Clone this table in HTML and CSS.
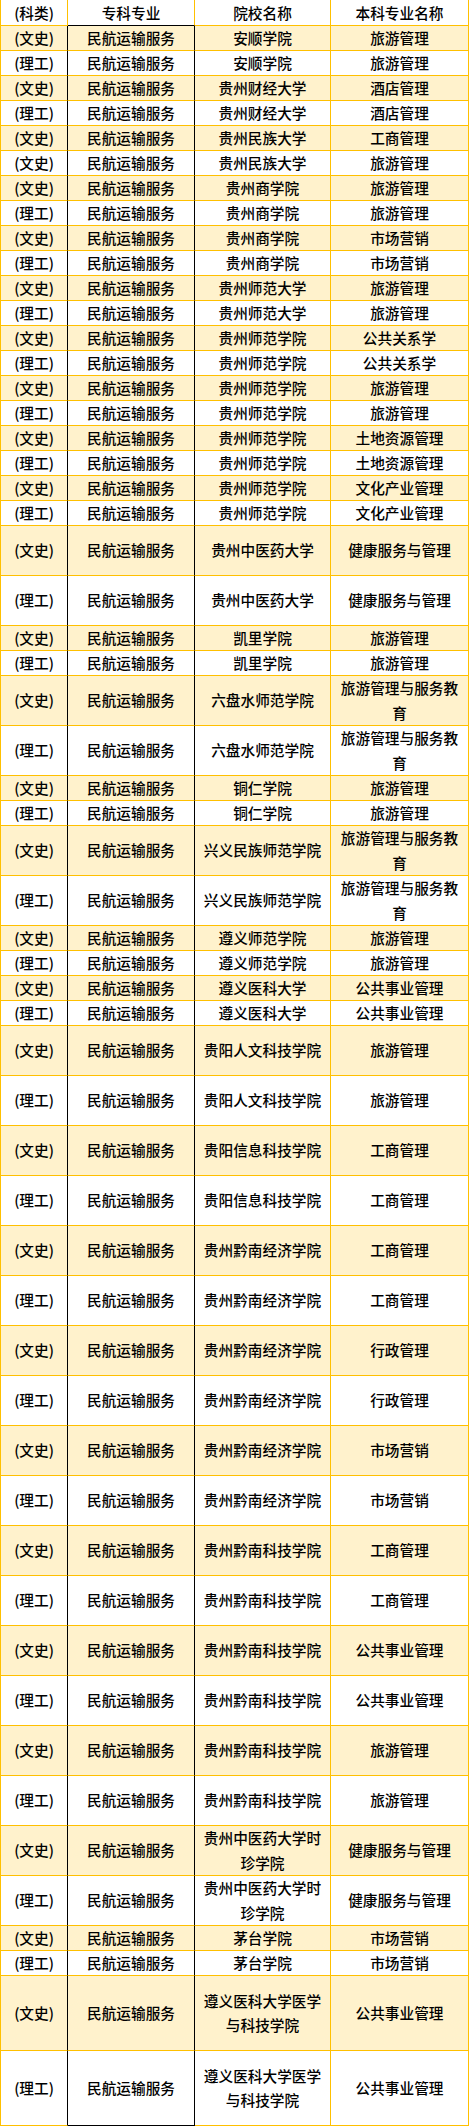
FILE: index.html
```html
<!DOCTYPE html>
<html lang="zh-CN">
<head>
<meta charset="utf-8">
<title>民航运输服务 专升本对应专业</title>
<link rel="stylesheet" href="styles.css">
</head>
<body>
<table class="sheet">
<colgroup><col class="c1"><col class="c2"><col class="c3"><col class="c4"></colgroup>
<thead>
<tr class="head"><th>(科类)</th><th>专科专业</th><th>院校名称</th><th>本科专业名称</th></tr>
</thead>
<tbody>
<tr class="s first"><td>(文史)</td><td>民航运输服务</td><td>安顺学院</td><td>旅游管理</td></tr>
<tr><td>(理工)</td><td>民航运输服务</td><td>安顺学院</td><td>旅游管理</td></tr>
<tr class="s"><td>(文史)</td><td>民航运输服务</td><td>贵州财经大学</td><td>酒店管理</td></tr>
<tr><td>(理工)</td><td>民航运输服务</td><td>贵州财经大学</td><td>酒店管理</td></tr>
<tr class="s"><td>(文史)</td><td>民航运输服务</td><td>贵州民族大学</td><td>工商管理</td></tr>
<tr><td>(文史)</td><td>民航运输服务</td><td>贵州民族大学</td><td>旅游管理</td></tr>
<tr class="s"><td>(文史)</td><td>民航运输服务</td><td>贵州商学院</td><td>旅游管理</td></tr>
<tr><td>(理工)</td><td>民航运输服务</td><td>贵州商学院</td><td>旅游管理</td></tr>
<tr class="s"><td>(文史)</td><td>民航运输服务</td><td>贵州商学院</td><td>市场营销</td></tr>
<tr><td>(理工)</td><td>民航运输服务</td><td>贵州商学院</td><td>市场营销</td></tr>
<tr class="s"><td>(文史)</td><td>民航运输服务</td><td>贵州师范大学</td><td>旅游管理</td></tr>
<tr><td>(理工)</td><td>民航运输服务</td><td>贵州师范大学</td><td>旅游管理</td></tr>
<tr class="s"><td>(文史)</td><td>民航运输服务</td><td>贵州师范学院</td><td>公共关系学</td></tr>
<tr><td>(理工)</td><td>民航运输服务</td><td>贵州师范学院</td><td>公共关系学</td></tr>
<tr class="s"><td>(文史)</td><td>民航运输服务</td><td>贵州师范学院</td><td>旅游管理</td></tr>
<tr><td>(理工)</td><td>民航运输服务</td><td>贵州师范学院</td><td>旅游管理</td></tr>
<tr class="s"><td>(文史)</td><td>民航运输服务</td><td>贵州师范学院</td><td>土地资源管理</td></tr>
<tr><td>(理工)</td><td>民航运输服务</td><td>贵州师范学院</td><td>土地资源管理</td></tr>
<tr class="s"><td>(文史)</td><td>民航运输服务</td><td>贵州师范学院</td><td>文化产业管理</td></tr>
<tr><td>(理工)</td><td>民航运输服务</td><td>贵州师范学院</td><td>文化产业管理</td></tr>
<tr class="s h2"><td>(文史)</td><td>民航运输服务</td><td>贵州中医药大学</td><td>健康服务与管理</td></tr>
<tr class="h2"><td>(理工)</td><td>民航运输服务</td><td>贵州中医药大学</td><td>健康服务与管理</td></tr>
<tr class="s"><td>(文史)</td><td>民航运输服务</td><td>凯里学院</td><td>旅游管理</td></tr>
<tr><td>(理工)</td><td>民航运输服务</td><td>凯里学院</td><td>旅游管理</td></tr>
<tr class="s h2"><td>(文史)</td><td>民航运输服务</td><td>六盘水师范学院</td><td>旅游管理与服务教育</td></tr>
<tr class="h2"><td>(理工)</td><td>民航运输服务</td><td>六盘水师范学院</td><td>旅游管理与服务教育</td></tr>
<tr class="s"><td>(文史)</td><td>民航运输服务</td><td>铜仁学院</td><td>旅游管理</td></tr>
<tr><td>(理工)</td><td>民航运输服务</td><td>铜仁学院</td><td>旅游管理</td></tr>
<tr class="s h2"><td>(文史)</td><td>民航运输服务</td><td>兴义民族师范学院</td><td>旅游管理与服务教育</td></tr>
<tr class="h2"><td>(理工)</td><td>民航运输服务</td><td>兴义民族师范学院</td><td>旅游管理与服务教育</td></tr>
<tr class="s"><td>(文史)</td><td>民航运输服务</td><td>遵义师范学院</td><td>旅游管理</td></tr>
<tr><td>(理工)</td><td>民航运输服务</td><td>遵义师范学院</td><td>旅游管理</td></tr>
<tr class="s"><td>(文史)</td><td>民航运输服务</td><td>遵义医科大学</td><td>公共事业管理</td></tr>
<tr><td>(理工)</td><td>民航运输服务</td><td>遵义医科大学</td><td>公共事业管理</td></tr>
<tr class="s h2"><td>(文史)</td><td>民航运输服务</td><td>贵阳人文科技学院</td><td>旅游管理</td></tr>
<tr class="h2"><td>(理工)</td><td>民航运输服务</td><td>贵阳人文科技学院</td><td>旅游管理</td></tr>
<tr class="s h2"><td>(文史)</td><td>民航运输服务</td><td>贵阳信息科技学院</td><td>工商管理</td></tr>
<tr class="h2"><td>(理工)</td><td>民航运输服务</td><td>贵阳信息科技学院</td><td>工商管理</td></tr>
<tr class="s h2"><td>(文史)</td><td>民航运输服务</td><td>贵州黔南经济学院</td><td>工商管理</td></tr>
<tr class="h2"><td>(理工)</td><td>民航运输服务</td><td>贵州黔南经济学院</td><td>工商管理</td></tr>
<tr class="s h2"><td>(文史)</td><td>民航运输服务</td><td>贵州黔南经济学院</td><td>行政管理</td></tr>
<tr class="h2"><td>(理工)</td><td>民航运输服务</td><td>贵州黔南经济学院</td><td>行政管理</td></tr>
<tr class="s h2"><td>(文史)</td><td>民航运输服务</td><td>贵州黔南经济学院</td><td>市场营销</td></tr>
<tr class="h2"><td>(理工)</td><td>民航运输服务</td><td>贵州黔南经济学院</td><td>市场营销</td></tr>
<tr class="s h2"><td>(文史)</td><td>民航运输服务</td><td>贵州黔南科技学院</td><td>工商管理</td></tr>
<tr class="h2"><td>(理工)</td><td>民航运输服务</td><td>贵州黔南科技学院</td><td>工商管理</td></tr>
<tr class="s h2"><td>(文史)</td><td>民航运输服务</td><td>贵州黔南科技学院</td><td>公共事业管理</td></tr>
<tr class="h2"><td>(理工)</td><td>民航运输服务</td><td>贵州黔南科技学院</td><td>公共事业管理</td></tr>
<tr class="s h2"><td>(文史)</td><td>民航运输服务</td><td>贵州黔南科技学院</td><td>旅游管理</td></tr>
<tr class="h2"><td>(理工)</td><td>民航运输服务</td><td>贵州黔南科技学院</td><td>旅游管理</td></tr>
<tr class="s h2"><td>(文史)</td><td>民航运输服务</td><td>贵州中医药大学时珍学院</td><td>健康服务与管理</td></tr>
<tr class="h2"><td>(理工)</td><td>民航运输服务</td><td>贵州中医药大学时珍学院</td><td>健康服务与管理</td></tr>
<tr class="s"><td>(文史)</td><td>民航运输服务</td><td>茅台学院</td><td>市场营销</td></tr>
<tr><td>(理工)</td><td>民航运输服务</td><td>茅台学院</td><td>市场营销</td></tr>
<tr class="s h3"><td>(文史)</td><td>民航运输服务</td><td>遵义医科大学医学与科技学院</td><td>公共事业管理</td></tr>
<tr class="h3 last"><td>(理工)</td><td>民航运输服务</td><td>遵义医科大学医学与科技学院</td><td>公共事业管理</td></tr>
</tbody>
</table>
</body>
</html>
```

FILE: styles.css
```css
html, body {
  margin: 0;
  padding: 0;
  background: #ffffff;
}

.sheet {
  border-collapse: separate;
  border-spacing: 0;
  table-layout: fixed;
  width: 469px;
  font-family: "Noto Sans CJK SC", "Noto Sans", sans-serif;
  font-size: 14.67px;
  font-weight: 500;
  color: #000000;
}

.c1 { width: 68px; }
.c2 { width: 127px; }
.c3 { width: 136px; }
.c4 { width: 138px; }

.sheet th,
.sheet td {
  box-sizing: border-box;
  padding: 0 4px;
  height: 25px;
  line-height: 24px;
  text-align: center;
  vertical-align: middle;
  font-weight: 500;
  border-right: 1px solid #ffc000;
  border-bottom: 1px solid #ffc000;
  overflow: hidden;
}

.sheet th:first-child,
.sheet td:first-child {
  border-left: 1px solid #ffc000;
}

.sheet .head th {
  height: 26px;
  line-height: 25px;
}

/* black outline around the second column body */
.sheet td:first-child {
  border-right-color: #000000;
}
.sheet td:nth-child(2) {
  border-right-color: #000000;
}
.sheet .head th:nth-child(2) {
  border-bottom-color: #000000;
}
.sheet .last td:nth-child(2) {
  border-bottom-color: #000000;
}

.sheet .s td {
  background: #fff2cc;
}

.sheet .h2 td {
  height: 50px;
  line-height: 24.5px;
}

.sheet .h3 td {
  height: 75px;
  line-height: 24.5px;
}
```
